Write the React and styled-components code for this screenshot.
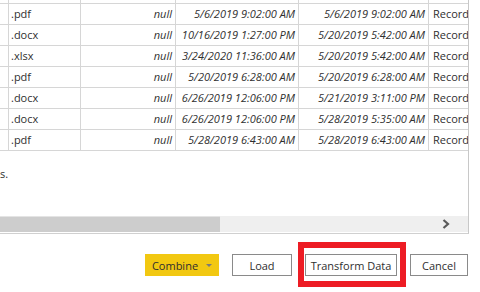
import React from "react";
import styled, { createGlobalStyle } from "styled-components";

const GlobalStyle = createGlobalStyle`
  html, body {
    margin: 0;
    padding: 0;
    background: #ffffff;
  }
  body {
    width: 480px;
    height: 292px;
    overflow: hidden;
    font-family: "Open Sans", "Noto Sans", sans-serif;
    font-size: 11px;
    color: #2f2f2f;
  }
`;

const Page = styled.div`
  width: 480px;
  height: 292px;
  display: flex;
  flex-direction: column;
`;

const Panel = styled.div`
  width: 468px;
  border-right: 1px solid #c8c8c8;
  border-bottom: 1px solid #d0d0d0;
  display: flex;
  flex-direction: column;
`;

const Grid = styled.div`
  display: grid;
  grid-template-columns: 7px 74px 95px 123px 130px 39px;
`;

const Cell = styled.div`
  height: ${props => props.$stub ? "4px" : "21px"};
  line-height: 20px;
  border-right: ${props => props.$last ? "none" : "1px solid #d6d6d6"};
  border-bottom: 1px solid #d6d6d6;
  padding: 0 ${props => props.$align === "right" ? "3px" : "4px"};
  text-align: ${props => props.$align || "left"};
  font-style: ${props => props.$italic ? "italic" : "normal"};
  white-space: nowrap;
  overflow: hidden;
  box-sizing: border-box;
  min-width: 0;
`;

const Message = styled.div`
  height: 65px;
  padding-top: 15px;
  box-sizing: border-box;
  line-height: 16px;
`;

const Scrollbar = styled.div`
  height: 16px;
  display: flex;
  background: #efefef;
  border-bottom: 1px solid #ffffff;
`;

const Thumb = styled.div`
  width: 220px;
  background: #cdcdcd;
  border-top: 1px solid #e4e4e4;
`;

const ArrowSlot = styled.div`
  margin-left: auto;
  width: 44px;
  display: flex;
  align-items: center;
  justify-content: center;
`;

const Footer = styled.div`
  display: flex;
  justify-content: flex-end;
  gap: 13px;
  padding: 20px 12px 0 0;
`;

const Button = styled.button`
  height: 22px;
  width: ${props => props.$w}px;
  padding: 0;
  margin: 0;
  font-family: inherit;
  font-size: 11px;
  color: #2f2f2f;
  background: ${props => props.$primary ? "#f2c811" : "#ffffff"};
  border: ${props => props.$primary ? "none" : "1px solid #8a8a8a"};
  display: flex;
  align-items: center;
  justify-content: center;
  gap: 8px;
  box-sizing: border-box;
`;

const Highlight = styled.div`
  position: relative;
  &::after {
    content: "";
    position: absolute;
    left: -7px;
    top: -12px;
    width: 108px;
    height: 45px;
    border: 6px solid #ed1c24;
    box-sizing: border-box;
    pointer-events: none;
  }
`;

const Caret = styled.span`
  width: 0;
  height: 0;
  border-left: 3px solid transparent;
  border-right: 3px solid transparent;
  border-top: 3px solid #7a7a7a;
`;

const rows = [
  [".pdf", "5/6/2019 9:02:00 AM", "5/6/2019 9:02:00 AM"],
  [".docx", "10/16/2019 1:27:00 PM", "5/20/2019 5:42:00 AM"],
  [".xlsx", "3/24/2020 11:36:00 AM", "5/20/2019 5:42:00 AM"],
  [".pdf", "5/20/2019 6:28:00 AM", "5/20/2019 6:28:00 AM"],
  [".docx", "6/26/2019 12:06:00 PM", "5/21/2019 3:11:00 PM"],
  [".docx", "6/26/2019 12:06:00 PM", "5/28/2019 5:35:00 AM"],
  [".pdf", "5/28/2019 6:43:00 AM", "5/28/2019 6:43:00 AM"],
];

export default function App() {
  return (
    <Page>
      <GlobalStyle />
      <Panel>
        <Grid>
          {[0, 1, 2, 3, 4, 5].map(i => (
            <Cell key={"s" + i} $stub $last={i === 5} />
          ))}
          {rows.map((r, i) => (
            <React.Fragment key={i}>
              <Cell />
              <Cell>{r[0]}</Cell>
              <Cell $align="right" $italic>null</Cell>
              <Cell $align="right" $italic>{r[1]}</Cell>
              <Cell $align="right" $italic>{r[2]}</Cell>
              <Cell $last>Record</Cell>
            </React.Fragment>
          ))}
        </Grid>
        <Message>s.</Message>
        <Scrollbar>
          <Thumb />
          <ArrowSlot>
            <svg width="8" height="10" viewBox="0 0 8 10">
              <path d="M1.5 1 L6 5 L1.5 9" fill="none" stroke="#5a5a5a" strokeWidth="2.2" />
            </svg>
          </ArrowSlot>
        </Scrollbar>
      </Panel>
      <Footer>
        <Button $primary $w={74}>
          Combine <Caret />
        </Button>
        <Button $w={60}>Load</Button>
        <Highlight>
          <Button $w={92}>Transform Data</Button>
        </Highlight>
        <Button $w={58}>Cancel</Button>
      </Footer>
    </Page>
  );
}
